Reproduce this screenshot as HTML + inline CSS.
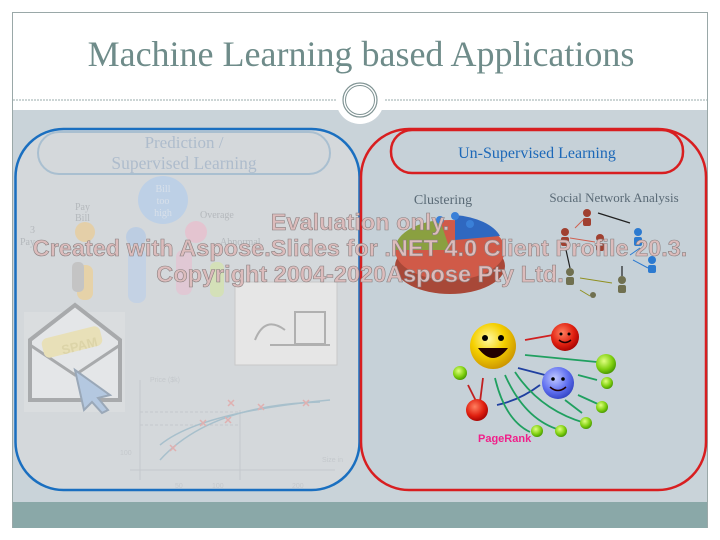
<!DOCTYPE html>
<html><head><meta charset="utf-8"><style>
html,body{margin:0;padding:0;background:#fff;width:720px;height:540px;overflow:hidden}
svg{display:block}
.wm{font-family:"Liberation Sans",sans-serif;font-weight:bold;font-size:23.5px;fill:#dcbcbc;stroke:#8a8080;stroke-width:0.6;text-anchor:middle}
.ser{font-family:"Liberation Serif",serif}
</style></head><body>
<svg width="720" height="540" viewBox="0 0 720 540">
<defs>
<radialGradient id="yl" cx="0.4" cy="0.35" r="0.7"><stop offset="0" stop-color="#fff8a0"/><stop offset="0.5" stop-color="#f5d000"/><stop offset="1" stop-color="#c89000"/></radialGradient>
<radialGradient id="rd" cx="0.4" cy="0.35" r="0.7"><stop offset="0" stop-color="#ff8060"/><stop offset="0.6" stop-color="#e02010"/><stop offset="1" stop-color="#a00000"/></radialGradient>
<radialGradient id="gr" cx="0.4" cy="0.35" r="0.7"><stop offset="0" stop-color="#e0ff80"/><stop offset="0.6" stop-color="#80d010"/><stop offset="1" stop-color="#409000"/></radialGradient>
<radialGradient id="bl" cx="0.4" cy="0.35" r="0.7"><stop offset="0" stop-color="#c0c8ff"/><stop offset="0.6" stop-color="#6070f0"/><stop offset="1" stop-color="#3040c0"/></radialGradient>
</defs>
<rect x="12.5" y="12.5" width="695" height="515" fill="#fff" stroke="#9aa8a8"/>
<rect x="13" y="110" width="694" height="392" fill="#c9d3d9"/>
<rect x="13" y="502" width="694" height="26" fill="#8aa8a8"/>
<text x="361" y="66" class="ser" font-size="36" fill="#6f8c8a" text-anchor="middle">Machine Learning based Applications</text>
<line x1="13" y1="100" x2="707" y2="100" stroke="#9aabab" stroke-dasharray="2,1"/>
<circle cx="360" cy="100" r="24" fill="#fff"/>
<circle cx="360" cy="100" r="17" fill="#fff" stroke="#7f9393" stroke-width="1.2"/>
<circle cx="360" cy="100" r="14.5" fill="none" stroke="#7f9393" stroke-width="1"/>

<rect x="15.5" y="129" width="344" height="361" rx="48" fill="#d4d8db" stroke="#1a6fc0" stroke-width="2.5"/>
<rect x="38" y="132" width="292" height="42" rx="21" fill="none" stroke="#a9bfd0" stroke-width="2"/>
<text x="184" y="148" class="ser" font-size="17" fill="#aebccc" text-anchor="middle">Prediction /</text>
<text x="184" y="169" class="ser" font-size="17.5" fill="#aebccc" text-anchor="middle">Supervised Learning</text>
<g class="ser" font-size="10" fill="#b4b8bc">
<text x="75" y="210">Pay</text><text x="75" y="221">Bill</text>
<text x="30" y="233">3</text><text x="20" y="245">Pay</text>
<text x="200" y="218">Overage</text><text x="220" y="245">Abnormal</text>
</g>
<ellipse cx="163" cy="200" rx="25" ry="24" fill="#bdd0e6"/>
<text x="163" y="192" class="ser" font-size="10" fill="#d8e0ea" text-anchor="middle">Bill</text>
<text x="163" y="204" class="ser" font-size="10" fill="#d8e0ea" text-anchor="middle">too</text>
<text x="163" y="216" class="ser" font-size="10" fill="#d8e0ea" text-anchor="middle">high</text>
<circle cx="85" cy="232" r="10" fill="#e4cfa8"/><rect x="77" y="265" width="16" height="35" rx="7" fill="#e6d2a8"/>
<circle cx="136" cy="237" r="10" fill="#bccde2"/><rect x="128" y="248" width="18" height="55" rx="8" fill="#c4d2e4"/>
<circle cx="196" cy="232" r="11" fill="#e4c4d0"/><rect x="176" y="250" width="16" height="45" rx="7" fill="#e0c8d4"/>
<rect x="72" y="262" width="12" height="30" rx="5" fill="#c4c4c4"/>
<rect x="210" y="262" width="14" height="35" rx="6" fill="#d4e0b8"/>
<rect x="235" y="282" width="102" height="83" fill="#e6e6e6" stroke="#c8c8c8"/>
<path d="M255 340 q10 -25 30 -10 M295 312 h30 v32 h-30z M270 345 h60" stroke="#b0b0b0" fill="none" stroke-width="2"/>
<rect x="24" y="312" width="101" height="100" fill="#dadddf"/>
<path d="M30 340 L75 305 L120 340 V400 H30 Z" fill="#e4e6e8" stroke="#a8aaac" stroke-width="4"/>
<path d="M30 345 L75 375 L120 345" fill="none" stroke="#a8aaac" stroke-width="3"/>
<rect x="42" y="332" width="60" height="20" rx="6" fill="#e8e0b8" transform="rotate(-14 72 342)"/>
<text x="60" y="352" font-family="Liberation Sans" font-weight="bold" font-size="13" fill="#dcd4a8" transform="rotate(-14 72 342)">SPAM</text>
<path d="M75 370 L110 395 L98 398 L108 410 L102 413 L92 402 L84 410 Z" fill="#b4c8e0" stroke="#9aa8b8" stroke-width="2"/>
<g stroke="#c4c8cc" fill="none">
<line x1="140" y1="380" x2="140" y2="480"/><line x1="130" y1="470" x2="335" y2="470"/>
<line x1="240" y1="410" x2="240" y2="480"/>
<line x1="140" y1="412" x2="240" y2="412" stroke-dasharray="3,2"/>
<line x1="140" y1="425" x2="240" y2="425" stroke-dasharray="3,2"/>
</g>
<path d="M160 445 Q200 412 330 400" stroke="#a8c0cc" fill="none" stroke-width="1.5"/>
<path d="M160 460 Q210 405 320 402" stroke="#a8c0cc" fill="none" stroke-width="1.5"/>
<g font-family="Liberation Sans" font-size="7" fill="#c4c8cc"><text x="150" y="382">Price ($k)</text><text x="120" y="455">100</text><text x="175" y="488">50</text><text x="212" y="488">100</text><text x="292" y="488">200</text><text x="322" y="462">Size in</text></g>
<g stroke="#e0b0b0" stroke-width="1.5"><path d="M228 400l6 6m0 -6l-6 6M258 404l6 6m0-6l-6 6M303 400l6 6m0-6l-6 6M200 420l6 6m0-6l-6 6M225 417l6 6m0-6l-6 6M170 445l6 6m0-6l-6 6"/></g>

<rect x="361" y="129" width="345" height="361" rx="48" fill="#c6d1d8" stroke="#d81e20" stroke-width="2.5"/>
<rect x="391" y="130" width="292" height="43" rx="21" fill="#c6d1d8" stroke="#d81e20" stroke-width="2.5"/>
<text x="537" y="158" class="ser" font-size="16" fill="#1c68b8" text-anchor="middle">Un-Supervised Learning</text>
<text x="443" y="204" class="ser" font-size="14" fill="#5a6a76" text-anchor="middle">Clustering</text>
<text x="614" y="202" class="ser" font-size="13" fill="#5a6a76" text-anchor="middle">Social Network Analysis</text>
<ellipse cx="450" cy="266" rx="55" ry="28" fill="#a84838"/>
<ellipse cx="450" cy="250" rx="55" ry="30" fill="#d05a48"/>
<path d="M450 250 L395 250 A55 30 0 0 1 440 220 Z" fill="#8aa040"/>
<path d="M455 240 L455 215 A55 30 0 0 1 500 236 Z" fill="#2f68c0"/>
<circle cx="440" cy="220" r="4" fill="#3a80d8"/><circle cx="455" cy="216" r="4" fill="#3a80d8"/><circle cx="470" cy="224" r="4" fill="#3a80d8"/>
<g fill="#a04030"><circle cx="587" cy="213" r="4"/><rect x="583" y="218" width="8" height="8" rx="2"/>
<circle cx="565" cy="232" r="4"/><rect x="561" y="237" width="8" height="9" rx="2"/>
<circle cx="600" cy="238" r="4"/><rect x="596" y="243" width="8" height="8" rx="2"/></g>
<g fill="#2c7ad0"><circle cx="638" cy="232" r="4"/><rect x="634" y="237" width="8" height="9" rx="2"/>
<circle cx="652" cy="260" r="4"/><rect x="648" y="265" width="8" height="8" rx="2"/></g>
<g fill="#707050"><circle cx="570" cy="272" r="4"/><rect x="566" y="277" width="8" height="8" rx="2"/>
<circle cx="622" cy="280" r="4"/><rect x="618" y="285" width="8" height="8" rx="2"/><circle cx="593" cy="295" r="3"/></g>
<g stroke="#202020" fill="none" stroke-width="1.2"><line x1="630" y1="223" x2="598" y2="213"/><line x1="570" y1="268" x2="566" y2="250"/><line x1="622" y1="276" x2="622" y2="266"/></g>
<g stroke="#d06050" fill="none"><line x1="570" y1="238" x2="595" y2="242"/><line x1="583" y1="220" x2="575" y2="228"/></g>
<g stroke="#2c7ad0" fill="none"><line x1="640" y1="248" x2="630" y2="255"/><line x1="648" y1="268" x2="633" y2="260"/></g>
<g stroke="#909020" fill="none"><line x1="580" y1="278" x2="612" y2="283"/><line x1="580" y1="290" x2="590" y2="296"/></g>
<g stroke-width="1.8" fill="none">
<path d="M553 335 L525 340" stroke="#d02020"/>
<path d="M597 362 L525 355" stroke="#20a060"/>
<path d="M545 375 L518 368" stroke="#2040a0"/>
<path d="M540 385 Q520 400 497 405" stroke="#2040a0"/>
<path d="M530 432 Q505 420 495 378" stroke="#20a060"/>
<path d="M560 430 Q525 420 505 375" stroke="#20a060"/>
<path d="M585 423 Q540 410 515 372" stroke="#20a060"/>
<path d="M597 380 L578 375 M600 405 L578 395 M582 413 L565 400" stroke="#20a060"/>
<path d="M478 405 L468 385 M480 402 L483 378" stroke="#c02020"/>
</g>
<circle cx="493" cy="346" r="23" fill="url(#yl)"/>
<circle cx="485" cy="338" r="3" fill="#000"/><circle cx="501" cy="338" r="3" fill="#000"/>
<path d="M478 348 Q493 368 508 348 Z" fill="#200"/>
<circle cx="565" cy="337" r="14" fill="url(#rd)"/>
<circle cx="558" cy="383" r="16" fill="url(#bl)"/>
<circle cx="606" cy="364" r="10" fill="url(#gr)"/>
<circle cx="607" cy="383" r="6" fill="url(#gr)"/>
<circle cx="602" cy="407" r="6" fill="url(#gr)"/>
<circle cx="586" cy="423" r="6" fill="url(#gr)"/>
<circle cx="561" cy="431" r="6" fill="url(#gr)"/>
<circle cx="537" cy="431" r="6" fill="url(#gr)"/>
<circle cx="460" cy="373" r="7" fill="url(#gr)"/>
<circle cx="477" cy="410" r="11" fill="url(#rd)"/>
<g fill="#000"><circle cx="561" cy="334" r="1.5"/><circle cx="569" cy="334" r="1.5"/><circle cx="553" cy="379" r="1.8"/><circle cx="563" cy="379" r="1.8"/></g>
<path d="M559 340 q6 5 12 0 M550 387 q8 7 16 0" stroke="#200" fill="none" stroke-width="1.5"/>
<text x="478" y="442" font-family="Liberation Sans" font-weight="bold" font-size="11" fill="#f0208a">PageRank</text>

<text x="360" y="230" class="wm">Evaluation only.</text>
<text x="360" y="256" class="wm">Created with Aspose.Slides for .NET 4.0 Client Profile 20.3.</text>
<text x="360" y="282" class="wm">Copyright 2004-2020Aspose Pty Ltd.</text>
</svg>
</body></html>
